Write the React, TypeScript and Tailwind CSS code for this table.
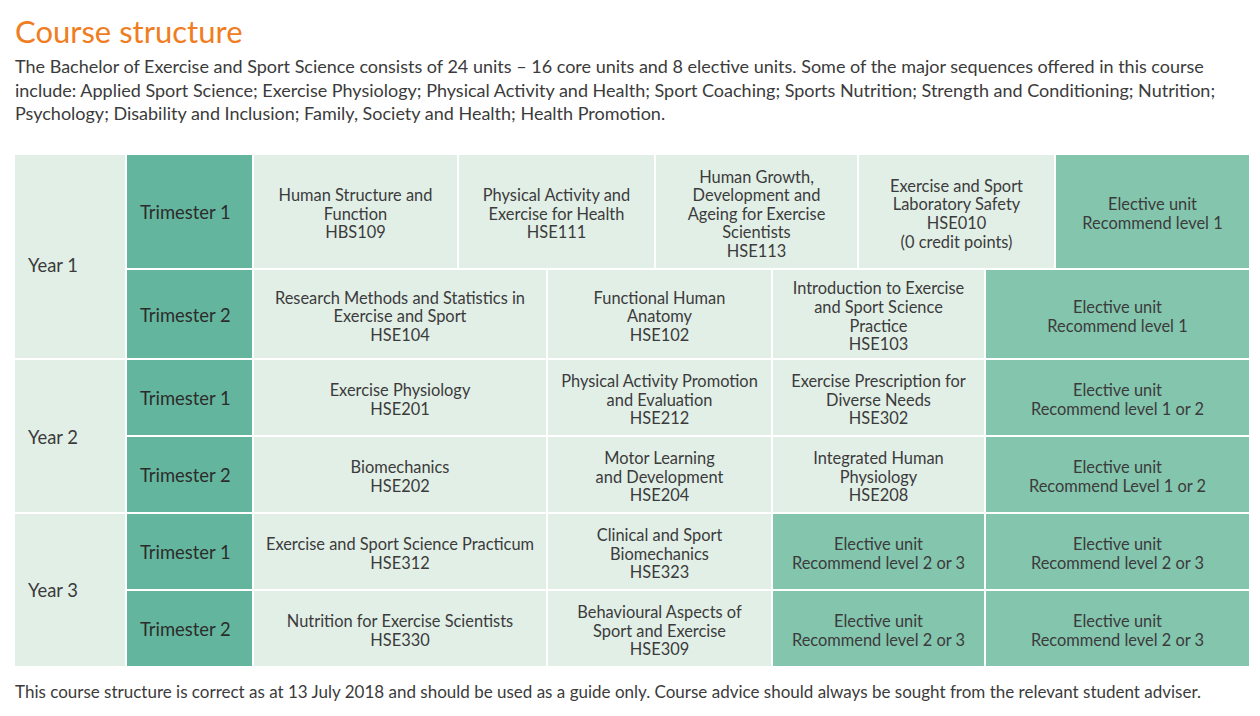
type Cell = {
  lines: string[];
  w: string;
  elective?: boolean;
};

type Term = {
  label: string;
  h: string;
  cells: Cell[];
};

type Year = {
  label: string;
  pad: string;
  terms: Term[];
};

const years: Year[] = [
  {
    label: "Year 1",
    pad: "pt-[18px]",
    terms: [
      {
        label: "Trimester 1",
        h: "h-[113px]",
        cells: [
          { lines: ["Human Structure and", "Function", "HBS109"], w: "w-[203px]" },
          { lines: ["Physical Activity and", "Exercise for Health", "HSE111"], w: "w-[195px]" },
          {
            lines: ["Human Growth,", "Development and", "Ageing for Exercise", "Scientists", "HSE113"],
            w: "w-[201px]",
          },
          {
            lines: ["Exercise and Sport", "Laboratory Safety", "HSE010", "(0 credit points)"],
            w: "w-[195px]",
          },
          { lines: ["Elective unit", "Recommend level 1"], w: "w-[193px]", elective: true },
        ],
      },
      {
        label: "Trimester 2",
        h: "h-[88px]",
        cells: [
          { lines: ["Research Methods and Statistics in", "Exercise and Sport", "HSE104"], w: "w-[292px]" },
          { lines: ["Functional Human", "Anatomy", "HSE102"], w: "w-[223px]" },
          {
            lines: ["Introduction to Exercise", "and Sport Science", "Practice", "HSE103"],
            w: "w-[211px]",
          },
          { lines: ["Elective unit", "Recommend level 1"], w: "w-[263px]", elective: true },
        ],
      },
    ],
  },
  {
    label: "Year 2",
    pad: "pt-[4px]",
    terms: [
      {
        label: "Trimester 1",
        h: "h-[75px]",
        cells: [
          { lines: ["Exercise Physiology", "HSE201"], w: "w-[292px]" },
          { lines: ["Physical Activity Promotion", "and Evaluation", "HSE212"], w: "w-[223px]" },
          { lines: ["Exercise Prescription for", "Diverse Needs", "HSE302"], w: "w-[211px]" },
          { lines: ["Elective unit", "Recommend level 1 or 2"], w: "w-[263px]", elective: true },
        ],
      },
      {
        label: "Trimester 2",
        h: "h-[75px]",
        cells: [
          { lines: ["Biomechanics", "HSE202"], w: "w-[292px]" },
          { lines: ["Motor Learning", "and Development", "HSE204"], w: "w-[223px]" },
          { lines: ["Integrated Human", "Physiology", "HSE208"], w: "w-[211px]" },
          { lines: ["Elective unit", "Recommend Level 1 or 2"], w: "w-[263px]", elective: true },
        ],
      },
    ],
  },
  {
    label: "Year 3",
    pad: "pt-[2px]",
    terms: [
      {
        label: "Trimester 1",
        h: "h-[75px]",
        cells: [
          { lines: ["Exercise and Sport Science Practicum", "HSE312"], w: "w-[292px]" },
          { lines: ["Clinical and Sport", "Biomechanics", "HSE323"], w: "w-[223px]" },
          { lines: ["Elective unit", "Recommend level 2 or 3"], w: "w-[211px]", elective: true },
          { lines: ["Elective unit", "Recommend level 2 or 3"], w: "w-[263px]", elective: true },
        ],
      },
      {
        label: "Trimester 2",
        h: "h-[75px]",
        cells: [
          { lines: ["Nutrition for Exercise Scientists", "HSE330"], w: "w-[292px]" },
          { lines: ["Behavioural Aspects of", "Sport and Exercise", "HSE309"], w: "w-[223px]" },
          { lines: ["Elective unit", "Recommend level 2 or 3"], w: "w-[211px]", elective: true },
          { lines: ["Elective unit", "Recommend level 2 or 3"], w: "w-[263px]", elective: true },
        ],
      },
    ],
  },
];

export default function App() {
  return (
    <div className="h-[716px] w-[1260px] bg-white px-[15px] pt-[11px] font-['Lato','Liberation_Sans',sans-serif] text-[#3b3b3b]">
      <h1 className="text-[31px] leading-[40px] text-[#f07d22]">Course structure</h1>
      <p className="mt-[4px] text-[18px] leading-[23.5px]">
        The Bachelor of Exercise and Sport Science consists of 24 units – 16 core units and 8 elective units. Some of
        the major sequences offered in this course include: Applied Sport Science; Exercise Physiology; Physical
        Activity and Health; Sport Coaching; Sports Nutrition; Strength and Conditioning; Nutrition; Psychology;
        Disability and Inclusion; Family, Society and Health; Health Promotion.
      </p>

      {/* units grid: year | trimester | units */}
      <div className="mt-[29px] flex w-[1234px] flex-col gap-[2px] text-[16.4px] leading-[18.6px]">
        {years.map((year) => (
          <div key={year.label} className="flex gap-[2px]">
            <div
              className={`flex w-[110px] shrink-0 items-center bg-[#e2efe7] pl-[13px] text-[18.4px] ${year.pad}`}
            >
              {year.label}
            </div>
            <div className="flex flex-col gap-[2px]">
              {year.terms.map((term) => (
                <div key={term.label} className={`flex gap-[2px] ${term.h}`}>
                  <div className="flex w-[125px] shrink-0 items-center bg-[#63b69d] pl-[13px] pt-[3px] text-[18.4px] text-[#2c2c2c]">
                    {term.label}
                  </div>
                  {term.cells.map((cell, i) => (
                    <div
                      key={i}
                      className={`flex shrink-0 flex-col items-center justify-center pt-[6px] text-center ${cell.w} ${
                        cell.elective ? "bg-[#84c5ae]" : "bg-[#e2efe7]"
                      }`}
                    >
                      {cell.lines.map((line) => (
                        <span key={line} className="whitespace-nowrap">
                          {line}
                        </span>
                      ))}
                    </div>
                  ))}
                </div>
              ))}
            </div>
          </div>
        ))}
      </div>

      <p className="mt-[14px] text-[17px] leading-[23px]">
        This course structure is correct as at 13 July 2018 and should be used as a guide only. Course advice should
        always be sought from the relevant student adviser.
      </p>
    </div>
  );
}
